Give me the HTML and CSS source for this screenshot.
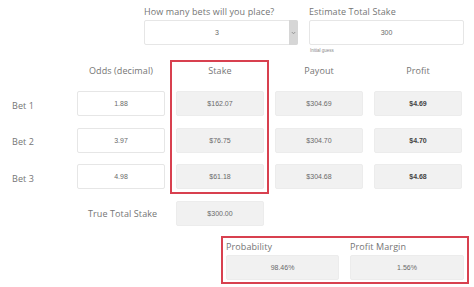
FILE: index.html
```html
<!DOCTYPE html>
<html>
<head>
<meta charset="utf-8">
<link rel="stylesheet" href="styles.css">
</head>
<body>
<div class="page">
  <div class="top">
    <div class="field field-bets">
      <div class="label">How many bets will you place?</div>
      <div class="select">
        <div class="select-value">3</div>
        <div class="select-arrow">
          <svg width="5" height="4" viewBox="0 0 5 4"><path d="M0.8 1 L2.5 2.8 L4.2 1" fill="none" stroke="#888" stroke-width="0.8"/></svg>
        </div>
      </div>
    </div>
    <div class="field field-stake">
      <div class="label">Estimate Total Stake</div>
      <div class="box input">300</div>
      <div class="hint">Initial guess</div>
    </div>
  </div>

  <div class="table">
    <div class="col col-labels">
      <div class="head"></div>
      <div class="cell rowlabel">Bet 1</div>
      <div class="cell rowlabel">Bet 2</div>
      <div class="cell rowlabel">Bet 3</div>
    </div>
    <div class="col col-odds">
      <div class="head">Odds (decimal)</div>
      <div class="cell box input">1.88</div>
      <div class="cell box input">3.97</div>
      <div class="cell box input">4.98</div>
    </div>
    <div class="col col-stake">
      <div class="head">Stake</div>
      <div class="cell box out">$162.07</div>
      <div class="cell box out">$76.75</div>
      <div class="cell box out">$61.18</div>
    </div>
    <div class="col col-payout">
      <div class="head">Payout</div>
      <div class="cell box out">$304.69</div>
      <div class="cell box out">$304.70</div>
      <div class="cell box out">$304.68</div>
    </div>
    <div class="col col-profit">
      <div class="head">Profit</div>
      <div class="cell box out bold">$4.69</div>
      <div class="cell box out bold">$4.70</div>
      <div class="cell box out bold">$4.68</div>
    </div>
  </div>

  <div class="total">
    <div class="total-label">True Total Stake</div>
    <div class="box out total-box">$300.00</div>
  </div>

  <div class="summary">
    <div class="sum-field sum-prob">
      <div class="sum-label">Probability</div>
      <div class="box out">98.46%</div>
    </div>
    <div class="sum-field sum-margin">
      <div class="sum-label">Profit Margin</div>
      <div class="box out">1.56%</div>
    </div>
  </div>
</div>
</body>
</html>
```

FILE: styles.css
```css
html, body {
  margin: 0;
  padding: 0;
  background: #fff;
}
body {
  font-family: "Open Sans", "DejaVu Sans", sans-serif;
  color: #6f6f6f;
  width: 474px;
  height: 287px;
  overflow: hidden;
}
.page {
  position: relative;
}
.label, .head, .rowlabel, .total-label, .sum-label {
  font-size: 9px;
  color: #757575;
  letter-spacing: 0.1px;
}
.box {
  box-sizing: border-box;
  height: 25px;
  border: 1px solid #e6e6e6;
  border-radius: 2px;
  display: flex;
  align-items: center;
  justify-content: center;
  font-family: "Liberation Sans", Arial, sans-serif;
  font-size: 7px;
  color: #6a6a6a;
}
.input {
  background: #fff;
}
.out {
  background: #f1f1f1;
  border-color: #ececec;
}
.bold {
  font-weight: bold;
  color: #444;
}

/* top */
.top {
  display: flex;
  padding-left: 144px;
  padding-top: 5px;
  gap: 11px;
  height: 53px;
  box-sizing: border-box;
}
.field .label {
  height: 15px;
  line-height: 13px;
}
.field-bets {
  width: 154px;
}
.field-stake {
  width: 155px;
}
.select {
  display: flex;
  height: 25px;
  border: 1px solid #e6e6e6;
  border-radius: 2px;
  box-sizing: border-box;
}
.select-value {
  flex: 1;
  display: flex;
  align-items: center;
  justify-content: center;
  font-family: "Liberation Sans", Arial, sans-serif;
  font-size: 7px;
  color: #6a6a6a;
}
.select-arrow {
  width: 9px;
  background: #d6d6d6;
  border-radius: 0 2px 2px 0;
  margin: -1px -1px -1px 0;
  display: flex;
  align-items: center;
  justify-content: center;
}
.hint {
  font-family: "Liberation Sans", Arial, sans-serif;
  font-size: 4.5px;
  color: #888;
  margin-top: 3px;
  padding-left: 1px;
}

/* table */
.table {
  display: flex;
  padding-left: 12px;
  padding-top: 9px;
}
.col {
  display: flex;
  flex-direction: column;
  gap: 11.5px;
}
.head {
  height: 17.5px;
  display: flex;
  align-items: center;
  justify-content: center;
}
.col .cell {
  height: 25px;
}
.col-labels {
  width: 65px;
}
.rowlabel {
  display: flex;
  align-items: center;
  padding-top: 3px;
  box-sizing: border-box;
}
.col-odds {
  width: 88px;
}
.col-stake {
  width: 99px;
  box-sizing: border-box;
  margin-left: 5px;
  border: 2px solid #d8404f;
  padding: 0 3px 3px 4px;
  margin-top: -2px;
}
.col-payout {
  width: 88px;
  margin-left: 6px;
}
.col-profit {
  width: 88px;
  margin-left: 11px;
}

/* total */
.total {
  display: flex;
  align-items: center;
  margin-top: 7px;
}
.total-label {
  width: 176px;
  box-sizing: border-box;
  padding-left: 88px;
}
.total-box {
  width: 88px;
}

/* summary */
.summary {
  position: absolute;
  left: 221px;
  top: 236px;
  width: 248px;
  height: 48px;
  box-sizing: border-box;
  border: 2px solid #d8404f;
  display: flex;
  gap: 11px;
  padding: 3px 3px 0 3px;
}
.sum-field .sum-label {
  height: 14px;
  line-height: 12px;
}
.sum-prob {
  width: 113px;
}
.sum-margin {
  width: 114px;
}
```
